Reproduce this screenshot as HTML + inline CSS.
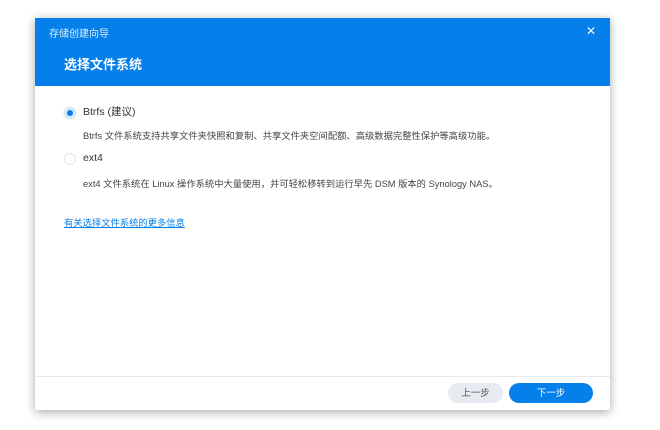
<!DOCTYPE html>
<html><head><meta charset="utf-8"><style>
body{margin:0;width:660px;height:430px;background:#fff;font-family:"Liberation Sans","Noto Sans CJK SC",sans-serif;position:relative;overflow:hidden}
.dlg{position:absolute;left:35px;top:18px;width:575px;height:392px;background:#fff;box-shadow:0 2px 10px rgba(0,0,0,.35);border-radius:2px}
.hd{position:absolute;left:0;top:0;width:575px;height:68px;background:#057fea;color:#fff}
.t1{position:absolute;left:14px;top:7px;font-size:10px;opacity:.85}
.t2{position:absolute;left:29px;top:36px;font-size:13px;font-weight:bold}
.x{position:absolute;left:551px;top:6px;font-size:12px}
.r{position:absolute;width:12px;height:12px;border-radius:50%;box-sizing:border-box}
.lab{position:absolute;font-size:10.5px;color:#333}
.desc{position:absolute;font-size:9.3px;color:#444}
.ft{position:absolute;left:0;top:358px;width:575px;border-top:1px solid #e6e9ee}
.b{position:absolute;top:365px;height:20px;border-radius:10px;font-size:9.5px;line-height:22px;text-align:center}
</style></head><body>
<div class="dlg">
<div class="hd"><div class="t1">存储创建向导</div><div class="t2">选择文件系统</div><div class="x">✕</div></div>
<div class="r" style="left:29px;top:89px;background:#057fea;border:3px solid #d9e9f9;box-shadow:0 0 0 1px #eef3f8"></div>
<div class="lab" style="left:48px;top:86px">Btrfs (建议)</div>
<div class="desc" style="left:48px;top:110px">Btrfs 文件系统支持共享文件夹快照和复制、共享文件夹空间配额、高级数据完整性保护等高级功能。</div>
<div class="r" style="left:29px;top:135px;border:1px solid #e2e5ea"></div>
<div class="lab" style="left:48px;top:134px">ext4</div>
<div class="desc" style="left:48px;top:158px">ext4 文件系统在 Linux 操作系统中大量使用，并可轻松移转到运行早先 DSM 版本的 Synology NAS。</div>
<div class="desc" style="left:29px;top:197px;color:#057fea;text-decoration:underline">有关选择文件系统的更多信息</div>
<div class="ft"></div>
<div class="b" style="left:413px;width:55px;background:#e8ecf2;color:#555">上一步</div>
<div class="b" style="left:474px;width:84px;background:#057fea;color:#fff">下一步</div>
</div>
</body></html>
